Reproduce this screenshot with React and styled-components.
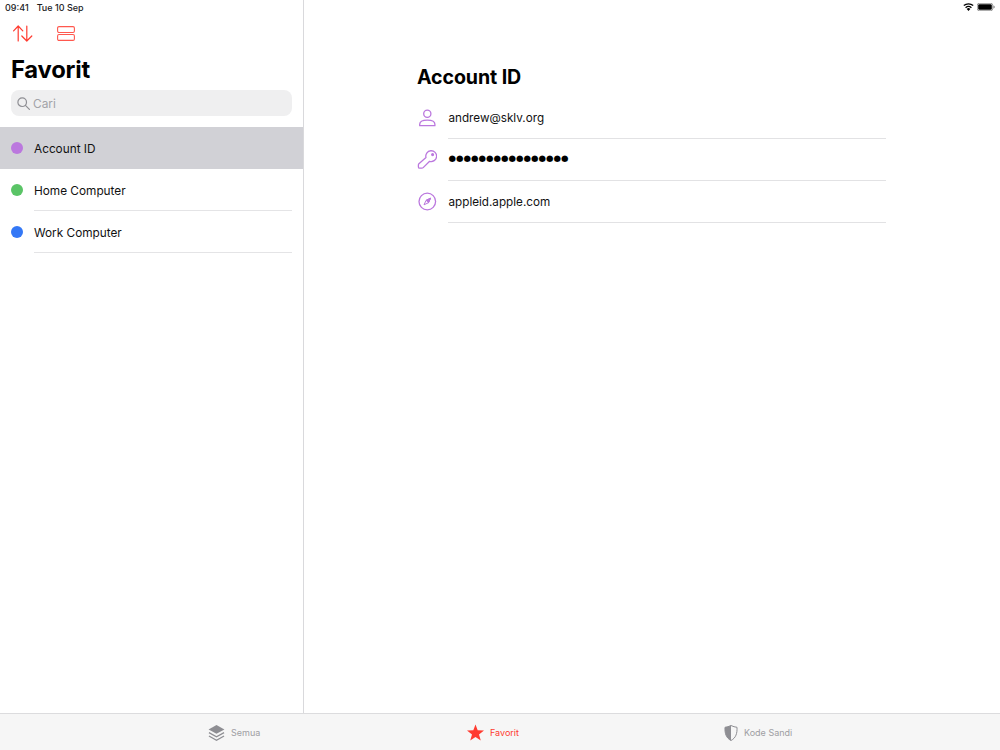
import React from "react";
import styled, { createGlobalStyle } from "styled-components";

const Global = createGlobalStyle`
  html, body { margin: 0; padding: 0; background: #fff; }
  body { font-family: Inter, "Liberation Sans", sans-serif; color: #000; -webkit-font-smoothing: antialiased; }
`;
const Page = styled.div`
  width: 1000px; height: 750px; display: flex; flex-direction: column; overflow: hidden; position: relative;
`;
const Main = styled.div`
  flex: 1; display: flex; min-height: 0;
`;
const Sidebar = styled.aside`
  width: 303px; border-right: 1px solid #d9d9dc; display: flex; flex-direction: column; flex-shrink: 0;
`;
const StatusLeft = styled.div`
  height: 15px; padding: 0 0 0 5px; display: flex; gap: 8px; align-items: center;
  font-size: 9px; font-weight: 500; color: #1c1c1e; line-height: 15px;
`;
const StatusRight = styled.div`
  position: absolute; top: 3px; right: 5px; display: flex; align-items: center; gap: 3px;
`;
const Tools = styled.div`
  display: flex; align-items: center; gap: 24px; padding: 8px 0 0 13px; height: 21px;
`;
const Title = styled.h1`
  margin: 11px 0 0 11px; font-size: 23.8px; line-height: 30px; font-weight: 700; letter-spacing: -0.2px;
`;
const Search = styled.div`
  margin: 5px 11px 0 11px; height: 26px; border-radius: 8px; background: #efeff0;
  display: flex; align-items: center; gap: 3px; padding-left: 6px;
  font-size: 11.9px; color: #a3a3a8;
`;
const List = styled.div`
  margin-top: 11px; display: flex; flex-direction: column;
`;
const Row = styled.div`
  height: 42px; display: flex; align-items: stretch; padding-left: 11px;
  padding-right: ${p => (p.$active ? "0" : "11px")};
  background: ${p => (p.$active ? "#d1d1d6" : "transparent")};
`;
const Dot = styled.span`
  width: 12px; height: 12px; border-radius: 50%; background: ${p => p.$color};
  flex-shrink: 0; align-self: center; margin-right: 11px;
`;
const RowLabel = styled.div`
  flex: 1; display: flex; align-items: center; font-size: 11.8px; color: #111; padding-top: 2px;
  border-bottom: 1px solid ${p => (p.$active ? "transparent" : "#e4e4e6")};
`;
const Detail = styled.main`
  flex: 1; padding: 64px 114px 0 113px;
`;
const DetailTitle = styled.h2`
  margin: 0 0 7px 0; font-size: 19.6px; line-height: 26px; font-weight: 700; letter-spacing: -0.1px;
`;
const Field = styled.div`
  display: flex; align-items: stretch; height: 42px;
`;
const FieldIcon = styled.div`
  width: 31px; flex-shrink: 0; display: flex; align-items: center; justify-content: flex-start;
`;
const FieldValue = styled.div`
  flex: 1; display: flex; align-items: center; font-size: 11.7px; color: #111; padding-left: 0.5px;
  border-bottom: 1px solid #e2e2e4;
`;
const Bullets = styled.span`
  font-size: 8.6px; color: #000; font-family: "DejaVu Sans", sans-serif; margin-bottom: 3px;
`;
const TabBar = styled.nav`
  height: 37px; box-sizing: border-box; background: #f6f6f6; border-top: 1px solid #dcdcde;
  display: grid; grid-template-columns: 259px 257px 1fr; padding: 1px 0 0 208px;
`;
const Tab = styled.div`
  display: flex; align-items: center; gap: 6px; font-size: 9px; font-weight: 400;
  color: ${p => (p.$active ? "#ff3b30" : "#9e9ea3")};
`;

const Sort = () => (
  <svg width="20" height="17" viewBox="0 0 20 17" fill="none" stroke="#ff3b30" strokeWidth="1.2" strokeLinecap="round" strokeLinejoin="round">
    <path d="M5.200 16V1M0.600 5.800L5.200 1l4.600 4.800" />
    <path d="M13.800 1v15M8.800 11l5 5 5-5" />
  </svg>
);
const SplitRows = () => (
  <svg width="18" height="15" viewBox="0 0 18 15" fill="none" stroke="#ff3b30" strokeWidth="1.1" opacity="0.85">
    <rect x="0.6" y="0.6" width="16.8" height="5.900" rx="1.400" />
    <rect x="0.6" y="8.500" width="16.8" height="5.900" rx="1.400" />
  </svg>
);
const Magnifier = () => (
  <svg width="13" height="13" viewBox="0 0 13 13" fill="none" stroke="#8e8e93" strokeWidth="1.2" strokeLinecap="round">
    <circle cx="5.2" cy="5.2" r="4.3" />
    <path d="M8.4 8.4l4 4" />
  </svg>
);
const Wifi = () => (
  <svg width="11" height="8" viewBox="0 0 11 8">
    <path d="M5.500 8L3.700 5.900a2.700 2.700 0 013.600 0z" fill="#000" />
    <path d="M2.600 4.700a4.400 4.400 0 015.800 0M0.800 2.600a7.100 7.100 0 019.400 0" fill="none" stroke="#000" strokeWidth="1.3" />
  </svg>
);
const Battery = () => (
  <svg width="18" height="8" viewBox="0 0 18 8">
    <rect x="0.3" y="0.3" width="15.4" height="7.4" rx="2" fill="none" stroke="#555" strokeWidth="0.6" />
    <rect x="1.2" y="1.2" width="13.6" height="5.6" rx="1.2" fill="#000" />
    <path d="M16.500 2.600c.8.2 1.200.7 1.200 1.400s-.4 1.200-1.200 1.400z" fill="#777" />
  </svg>
);
const purple = "#bb78de";
const Person = () => (
  <svg width="20" height="20" viewBox="0 0 20 20" fill="none" stroke={purple} strokeWidth="1.3">
    <circle cx="10.300" cy="5.800" r="3.600" />
    <path d="M2.700 17.700h15.200v-1.500c0-2.400-3-4.100-7.600-4.100s-7.600 1.700-7.600 4.100z" strokeLinejoin="round" />
  </svg>
);
const Key = () => (
  <svg width="20" height="20" viewBox="0 0 20 20" fill="none" stroke={purple} strokeWidth="1.3" strokeLinejoin="round">
    <path d="M9 7.600A5.400 5.400 0 1112.600 11.300L6.200 17.600Q5.600 18.200 4.800 18.200H2.600Q1.400 18.200 1.400 17V15Q1.400 14.300 1.900 13.800Z" />
    <circle cx="15.600" cy="4.600" r="0.900" fill={purple} />
  </svg>
);
const Compass = () => (
  <svg width="20" height="20" viewBox="0 0 20 20" fill="none" stroke={purple} strokeWidth="1.3" strokeLinejoin="round">
    <circle cx="10.300" cy="9.500" r="8.300" />
    <path d="M13.600 6.200l-4.500 2.100-2.100 4.500 4.500-2.100z" strokeWidth="1" />
    <path d="M13.600 6.200l-4.500 2.100 2.400 2.400z" fill={purple} strokeWidth="1" />
  </svg>
);
const Layers = () => (
  <svg width="17" height="18" viewBox="0 0 18 18">
    <path d="M9 .6l8.400 4.600L9 9.800.6 5.200z" fill="#8e8e93" />
    <path d="M1 8.600L9 13l8-4.400M1 12.200l8 4.600 8-4.600" fill="none" stroke="#8e8e93" strokeWidth="1.3" />
  </svg>
);
const Star = () => (
  <svg width="17" height="17" viewBox="0 0 18 17">
    <path d="M9 0l2.300 6.200 6.700.3-5.300 4.100 1.900 6.400L9 13.300 3.400 17l1.900-6.400L0 6.500l6.700-.3z" fill="#ff3b30" />
  </svg>
);
const Shield = () => (
  <svg width="14" height="16" viewBox="0 0 14 16">
    <path d="M7 .5C5 1.500 3 2.100 1 2.300c-.3 5.900 1 10.600 6 13.200 5-2.600 6.300-7.300 6-13.200C11 2.100 9 1.500 7 .5z" fill="none" stroke="#8e8e93" strokeWidth="1" />
    <path d="M7 .5C5 1.500 3 2.100 1 2.300c-.3 5.900 1 10.600 6 13.200z" fill="#8e8e93" />
  </svg>
);

const rows = [
  { label: "Account ID", color: "#bb78de", active: true },
  { label: "Home Computer", color: "#5ac466" },
  { label: "Work Computer", color: "#3478f6" },
];

export default function App() {
  return (
    <Page>
      <Global />
      <StatusRight><Wifi /><Battery /></StatusRight>
      <Main>
        <Sidebar>
          <StatusLeft><span>09:41</span><span>Tue 10 Sep</span></StatusLeft>
          <Tools><Sort /><SplitRows /></Tools>
          <Title>Favorit</Title>
          <Search><Magnifier /><span>Cari</span></Search>
          <List>
            {rows.map(r => (
              <Row key={r.label} $active={r.active}>
                <Dot $color={r.color} />
                <RowLabel $active={r.active}>{r.label}</RowLabel>
              </Row>
            ))}
          </List>
        </Sidebar>
        <Detail>
          <DetailTitle>Account ID</DetailTitle>
          <Field><FieldIcon><Person /></FieldIcon><FieldValue>andrew@sklv.org</FieldValue></Field>
          <Field><FieldIcon><Key /></FieldIcon><FieldValue><Bullets>●●●●●●●●●●●●●●●●</Bullets></FieldValue></Field>
          <Field><FieldIcon><Compass /></FieldIcon><FieldValue>appleid.apple.com</FieldValue></Field>
        </Detail>
      </Main>
      <TabBar>
        <Tab><Layers /><span>Semua</span></Tab>
        <Tab $active><Star /><span>Favorit</span></Tab>
        <Tab><Shield /><span>Kode Sandi</span></Tab>
      </TabBar>
    </Page>
  );
}
